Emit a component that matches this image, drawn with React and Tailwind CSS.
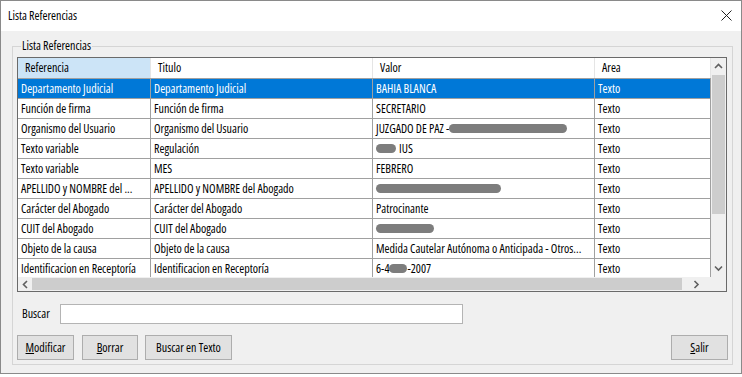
import React from "react";

const columns = [
  { label: "Referencia", w: "w-[133px]", active: true },
  { label: "Titulo", w: "w-[222px]" },
  { label: "Valor", w: "w-[222px]" },
  { label: "Area", w: "w-[116px]" },
];

const widths = ["w-[133px]", "w-[222px]", "w-[222px]", "w-[116px]"];

// gray blob used where the original values are hidden
function Blur({ w, className = "" }) {
  return <span className={`inline-block h-[9px] rounded-full bg-[#7d7d7d] align-middle ${w} ${className}`} />;
}

const rows = [
  ["Departamento Judicial", "Departamento Judicial", "BAHIA BLANCA", "Texto"],
  ["Función de firma", "Función de firma", "SECRETARIO", "Texto"],
  [
    "Organismo del Usuario",
    "Organismo del Usuario",
    <>
      JUZGADO DE PAZ -<Blur w="w-[118px]" />
    </>,
    "Texto",
  ],
  [
    "Texto variable",
    "Regulación",
    <>
      <Blur w="w-[20px]" className="mr-[3px]" />IUS
    </>,
    "Texto",
  ],
  ["Texto variable", "MES", "FEBRERO", "Texto"],
  ["APELLIDO y NOMBRE del ...", "APELLIDO y NOMBRE del Abogado", <Blur w="w-[125px]" />, "Texto"],
  ["Carácter del Abogado", "Carácter del Abogado", "Patrocinante", "Texto"],
  ["CUIT del Abogado", "CUIT del Abogado", <Blur w="w-[58px]" />, "Texto"],
  ["Objeto de la causa", "Objeto de la causa", "Medida Cautelar Autónoma o Anticipada - Otros...", "Texto"],
  [
    "Identificacion en Receptoría",
    "Identificacion en Receptoría",
    <>
      6-4<Blur w="w-[18px]" />-2007
    </>,
    "Texto",
  ],
];

function Chevron({ dir }) {
  const paths = {
    up: "M1 5 L4.5 1.5 L8 5",
    down: "M1 1.5 L4.5 5 L8 1.5",
    left: "M5 1 L1.5 4.5 L5 8",
    right: "M1.5 1 L5 4.5 L1.5 8",
  };
  const size = dir === "up" || dir === "down" ? { w: 9, h: 7 } : { w: 7, h: 9 };
  return (
    <svg width={size.w} height={size.h} viewBox={`0 0 ${size.w} ${size.h}`}>
      <path d={paths[dir]} fill="none" stroke="#606060" strokeWidth="1.6" />
    </svg>
  );
}

function Button({ children, w, className = "" }) {
  return (
    <button
      className={`h-[25px] ${w} border border-[#adadad] bg-[#e1e1e1] text-[12px] text-black ${className}`}
    >
      {children}
    </button>
  );
}

export default function App() {
  return (
    <div className="w-[742px] h-[377px] overflow-hidden bg-white text-black font-['Open_Sans',sans-serif] font-stretch-condensed text-[12px]">
      <div className="h-[374px] border border-[#8a8a8a] bg-[#f0f0f0] flex flex-col">
        {/* title bar */}
        <div className="h-[30px] bg-white flex items-center justify-between pl-[7px] pr-[9px] pb-[1px]">
          <span className="text-[12px]">Lista Referencias</span>
          <svg width="11" height="11" viewBox="0 0 11 11">
            <path d="M0.5 0.5 L10.5 10.5 M10.5 0.5 L0.5 10.5" stroke="#222" strokeWidth="1" />
          </svg>
        </div>

        <div className="flex-1 pt-[8px] px-[11px]">
          <fieldset className="border border-[#d5d5d5] pl-[4px] pr-[5px] pb-[4px]">
            <legend className="ml-[4px] px-[1px] leading-[14px]">Lista Referencias</legend>

            {/* grid */}
            <div className="mt-[4px] w-[710px] h-[235px] border border-[#6a6a6a] bg-[#f0f0f0] flex flex-col">
              <div className="h-[219px] flex">
                <div className="w-[693px] bg-white overflow-hidden">
                  <div className="flex h-[21px] border-b border-[#a0a0a0]">
                    {columns.map((c) => (
                      <div
                        key={c.label}
                        className={`${c.w} shrink-0 flex items-center pl-[7px] border-r border-[#e5e5e5] ${
                          c.active ? "bg-[#cce4f7]" : "bg-white"
                        }`}
                      >
                        {c.label}
                      </div>
                    ))}
                  </div>
                  {rows.map((r, i) => (
                    <div
                      key={i}
                      className={`flex h-[20px] border-b border-[#a0a0a0] ${
                        i === 0 ? "bg-[#0078d7] text-white" : ""
                      }`}
                    >
                      {r.map((cell, j) => (
                        <div
                          key={j}
                          className={`${widths[j]} shrink-0 flex items-center pl-[3px] whitespace-nowrap overflow-hidden border-r border-[#a0a0a0]`}
                        >
                          {cell}
                        </div>
                      ))}
                    </div>
                  ))}
                </div>

                {/* vertical scrollbar */}
                <div className="w-[15px] flex flex-col bg-[#f0f0f0]">
                  <div className="h-[17px] flex items-center justify-center">
                    <Chevron dir="up" />
                  </div>
                  <div className="h-[139px] mx-[1px] bg-[#cdcdcd]" />
                  <div className="flex-1" />
                  <div className="h-[17px] flex items-center justify-center">
                    <Chevron dir="down" />
                  </div>
                </div>
              </div>

              {/* horizontal scrollbar */}
              <div className="h-[14px] flex">
                <div className="w-[693px] flex items-center">
                  <div className="w-[14px] flex items-center justify-center">
                    <Chevron dir="left" />
                  </div>
                  <div className="w-[650px] h-[12px] bg-[#cdcdcd]" />
                  <div className="flex-1 flex items-center justify-center">
                    <Chevron dir="right" />
                  </div>
                </div>
                <div className="w-[15px]" />
              </div>
            </div>

            {/* search */}
            <div className="mt-[12px] flex items-center">
              <span className="w-[43px] pl-[5px]">Buscar</span>
              <input className="w-[403px] h-[20px] bg-white border border-[#b4b4b4] outline-none" />
            </div>

            {/* buttons */}
            <div className="mt-[11px] flex">
              <Button w="w-[57px]">
                <u>M</u>odificar
              </Button>
              <Button w="w-[56px]" className="ml-[8px]">
                <u>B</u>orrar
              </Button>
              <Button w="w-[87px]" className="ml-[7px]">
                Buscar en Texto
              </Button>
              <Button w="w-[57px]" className="ml-auto mr-[-1px]">
                <u>S</u>alir
              </Button>
            </div>
          </fieldset>
        </div>
      </div>
    </div>
  );
}
